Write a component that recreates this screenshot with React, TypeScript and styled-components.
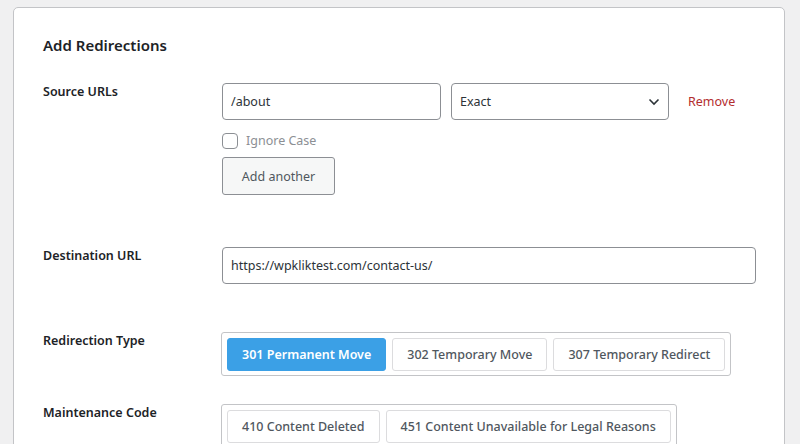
import React, { useState } from 'react';
import styled, { createGlobalStyle } from 'styled-components';

const GlobalStyle = createGlobalStyle`
  html, body {
    margin: 0;
    padding: 0;
    background: #f0f0f1;
    font-family: 'Noto Sans', 'Open Sans', sans-serif;
    color: #1d2327;
    overflow: hidden;
  }
`;

const redirectionTypes = ['301 Permanent Move', '302 Temporary Move', '307 Temporary Redirect'];
const maintenanceCodes = ['410 Content Deleted', '451 Content Unavailable for Legal Reasons'];

const App = () => {
  const [source, setSource] = useState('/about');
  const [destination, setDestination] = useState('https://wpkliktest.com/contact-us/');
  const [type, setType] = useState('301 Permanent Move');
  const [code, setCode] = useState('');

  return (
    <>
      <GlobalStyle />
      <Card>
        <Title>Add Redirections</Title>

        <Row gap={52}>
          <Label>Source URLs</Label>
          <Field>
            <SourceLine>
              <TextInput value={source} width={219} onChange={(e) => setSource(e.target.value)} />
              <SelectBox>
                <span>Exact</span>
                <svg width="12" height="8" viewBox="0 0 12 8">
                  <path d="M1.5 1.5 L6 6 L10.5 1.5" fill="none" stroke="#2c3338" strokeWidth="1.6" />
                </svg>
              </SelectBox>
              <RemoveLink>Remove</RemoveLink>
            </SourceLine>
            <CheckLine>
              <Checkbox />
              <CheckText>Ignore Case</CheckText>
            </CheckLine>
            <SecondaryButton>Add another</SecondaryButton>
          </Field>
        </Row>

        <Row gap={48}>
          <Label>Destination URL</Label>
          <Field>
            <TextInput value={destination} width={534} onChange={(e) => setDestination(e.target.value)} />
          </Field>
        </Row>

        <Row gap={28}>
          <Label>Redirection Type</Label>
          <Field>
            <ButtonGroup>
              {redirectionTypes.map((t) => (
                <GroupButton key={t} active={type === t} onClick={() => setType(t)}>
                  {t}
                </GroupButton>
              ))}
            </ButtonGroup>
          </Field>
        </Row>

        <Row gap={0}>
          <Label>Maintenance Code</Label>
          <Field>
            <ButtonGroup>
              {maintenanceCodes.map((c) => (
                <GroupButton key={c} active={code === c} onClick={() => setCode(c)}>
                  {c}
                </GroupButton>
              ))}
            </ButtonGroup>
          </Field>
        </Row>
      </Card>
    </>
  );
};

export default App;

interface rowProps {
  gap: number;
}

interface inputProps {
  width: number;
}

interface buttonProps {
  active?: boolean;
}

const Card = styled.div`
  margin: 7px 15px 0 13px;
  height: 470px;
  background: #fff;
  border: 1px solid #c3c4c7;
  border-radius: 5px;
  padding: 27px 29px 0 29px;
  box-sizing: border-box;
`;

const Title = styled.h2`
  margin: 0 0 27px 0;
  font-size: 15px;
  line-height: 21px;
  font-weight: 600;
  color: #1d2327;
`;

const Row = styled.div<rowProps>`
  display: flex;
  align-items: flex-start;
  margin-bottom: ${(p) => p.gap}px;
`;

const Label = styled.div`
  width: 179px;
  flex-shrink: 0;
  font-size: 12.5px;
  font-weight: 600;
  line-height: 18px;
  color: #1d2327;
`;

const Field = styled.div`
  display: flex;
  flex-direction: column;
  align-items: flex-start;
`;

const SourceLine = styled.div`
  display: flex;
  align-items: center;
  gap: 10px;
`;

const TextInput = styled.input<inputProps>`
  width: ${(p) => p.width}px;
  height: 37px;
  box-sizing: border-box;
  border: 1px solid #8c8f94;
  border-radius: 4px;
  padding: 0 8px;
  font-family: inherit;
  font-size: 12.5px;
  color: #2c3338;
  outline: none;
  background: #fff;
`;

const SelectBox = styled.div`
  width: 218px;
  height: 37px;
  box-sizing: border-box;
  border: 1px solid #8c8f94;
  border-radius: 4px;
  padding: 0 8px;
  display: flex;
  align-items: center;
  justify-content: space-between;
  font-size: 12.5px;
  color: #2c3338;
  background: #fff;
`;

const RemoveLink = styled.a`
  margin-left: 9px;
  font-size: 12.5px;
  color: #b32d2e;
  cursor: pointer;
`;

const CheckLine = styled.div`
  display: flex;
  align-items: center;
  gap: 8px;
  margin-top: 12px;
`;

const Checkbox = styled.span`
  width: 14px;
  height: 14px;
  border: 1px solid #8c8f94;
  border-radius: 4px;
  background: #fff;
`;

const CheckText = styled.span`
  font-size: 12.5px;
  color: #8c8f94;
`;

const SecondaryButton = styled.button`
  margin-top: 8px;
  width: 113px;
  height: 38px;
  border: 1px solid #8c8f94;
  border-radius: 3px;
  background: #f6f7f7;
  font-family: inherit;
  font-size: 12.5px;
  color: #50575e;
  cursor: pointer;
`;

const ButtonGroup = styled.div`
  display: flex;
  gap: 6px;
  padding: 5px 5px 4px 5px;
  border: 1px solid #c3c4c7;
  border-radius: 3px;
  margin-left: -1px;
`;

const GroupButton = styled.button<buttonProps>`
  height: 33px;
  padding: 0 14px;
  border: 1px solid ${(p) => (p.active ? '#3ba0e6' : '#dcdcde')};
  border-radius: 3px;
  background: ${(p) => (p.active ? '#3ba0e6' : '#fff')};
  color: ${(p) => (p.active ? '#fff' : '#50575e')};
  font-family: inherit;
  font-size: 12.5px;
  font-weight: ${(p) => (p.active ? 600 : 500)};
  cursor: pointer;
`;
